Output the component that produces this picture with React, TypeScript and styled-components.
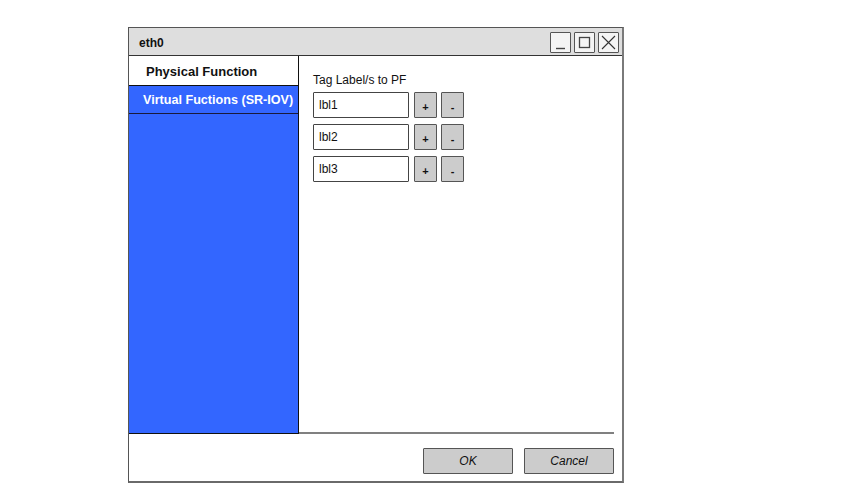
import styled, { createGlobalStyle } from "styled-components";

const Global = createGlobalStyle`
  html, body { margin: 0; padding: 0; background: #ffffff; }
  body {
    font-family: "Liberation Sans", Arial, sans-serif;
    font-size: 12px;
    color: #111;
  }
`;

const labels = ["lbl1", "lbl2", "lbl3"];

export default function App() {
  return (
    <Page>
      <Global />
      <Window>
        <TitleBar>
          <Title>eth0</Title>
          <WinButtons>
            <WinButton aria-label="minimize">
              <svg width="19" height="19" viewBox="0 0 19 19">
                <path d="M5 15.5 H14" stroke="#444" strokeWidth="1.4" fill="none" />
              </svg>
            </WinButton>
            <WinButton aria-label="maximize">
              <svg width="19" height="19" viewBox="0 0 19 19">
                <rect x="4.5" y="4.5" width="10" height="10" stroke="#444" strokeWidth="1.3" fill="none" />
              </svg>
            </WinButton>
            <WinButton aria-label="close">
              <svg width="19" height="19" viewBox="0 0 19 19">
                <path d="M3 3 L16 16 M16 3 L3 16" stroke="#333" strokeWidth="1.1" fill="none" />
              </svg>
            </WinButton>
          </WinButtons>
        </TitleBar>

        <Body>
          <Sidebar>
            <Tab>Physical Function</Tab>
            <Tab $active>Virtual Fuctions (SR-IOV)</Tab>
          </Sidebar>

          <Content>
            <FieldLabel>Tag Label/s to PF</FieldLabel>
            <Rows>
              {labels.map((l) => (
                <Row key={l}>
                  <TextBox>{l}</TextBox>
                  <SmallButton>+</SmallButton>
                  <SmallButton>-</SmallButton>
                </Row>
              ))}
            </Rows>
          </Content>
        </Body>

        <Footer>
          <ActionButton>OK</ActionButton>
          <ActionButton>Cancel</ActionButton>
        </Footer>
      </Window>
    </Page>
  );
}

const Page = styled.div`
  width: 844px;
  height: 490px;
  padding: 27px 0 0 128px;
  box-sizing: border-box;
`;

const Window = styled.div`
  width: 496px;
  height: 456px;
  box-sizing: border-box;
  border: 1px solid #555;
  border-right: 2px solid #7a7a7a;
  border-bottom: 2px solid #6a6a6a;
  display: flex;
  flex-direction: column;
  background: #fff;
`;

const TitleBar = styled.div`
  height: 28px;
  flex: none;
  box-sizing: border-box;
  background: #dedede;
  border-bottom: 1px solid #333;
  display: flex;
  align-items: center;
  justify-content: space-between;
  padding: 0 3px 0 10px;
`;

const Title = styled.span`
  font-weight: bold;
  font-size: 12px;
  margin-top: 2px;
`;

const WinButtons = styled.div`
  display: flex;
  gap: 3px;
  margin-top: 1px;
`;

const WinButton = styled.div`
  width: 21px;
  height: 21px;
  box-sizing: border-box;
  border: 1px solid #555;
  border-radius: 1px;
  background: #f4f4f4;
  display: flex;
  align-items: center;
  justify-content: center;
`;

const Body = styled.div`
  flex: 1;
  display: flex;
  min-height: 0;
`;

const Sidebar = styled.div`
  width: 170px;
  flex: none;
  box-sizing: border-box;
  background: #3366ff;
  border-right: 1px solid #111;
  border-bottom: 1px solid #111;
  display: flex;
  flex-direction: column;
`;

const Tab = styled.div<{ $active?: boolean }>`
  height: ${(p) => (p.$active ? "28px" : "30px")};
  box-sizing: border-box;
  padding-left: ${(p) => (p.$active ? "14px" : "17px")};
  padding-top: 1px;
  display: flex;
  align-items: center;
  font-weight: bold;
  font-size: ${(p) => (p.$active ? "12.6px" : "13px")};
  white-space: nowrap;
  color: ${(p) => (p.$active ? "#ffffff" : "#111")};
  background: ${(p) => (p.$active ? "#3366ff" : "#ffffff")};
  border-bottom: ${(p) => (p.$active ? "1.5px solid #1a1a3a" : "1px solid #111")};
`;

const Content = styled.div`
  flex: 1;
  margin-right: 8px;
  border-bottom: 2px solid #808080;
  padding: 17px 0 0 14px;
  display: flex;
  flex-direction: column;
`;

const FieldLabel = styled.div`
  font-size: 12px;
  height: 14px;
  line-height: 14px;
  margin-bottom: 5px;
`;

const Rows = styled.div`
  display: flex;
  flex-direction: column;
  gap: 6px;
`;

const Row = styled.div`
  display: flex;
  gap: 4px;
  height: 26px;
`;

const TextBox = styled.div`
  width: 96px;
  box-sizing: border-box;
  border: 1.5px solid #444;
  border-radius: 1px;
  background: #fff;
  padding-left: 5px;
  display: flex;
  align-items: center;
  font-size: 12px;
  margin-right: 1px;
`;

const SmallButton = styled.div`
  width: 23px;
  box-sizing: border-box;
  border: 1.5px solid #555;
  border-radius: 1px;
  background: #cccccc;
  display: flex;
  align-items: center;
  justify-content: center;
  font-size: 11px;
  font-weight: bold;
  padding-top: 3px;
`;

const Footer = styled.div`
  height: 47px;
  flex: none;
  box-sizing: border-box;
  display: flex;
  justify-content: flex-end;
  align-items: flex-start;
  gap: 11px;
  padding: 14px 8px 0 0;
`;

const ActionButton = styled.div`
  width: 90px;
  height: 26px;
  box-sizing: border-box;
  border: 1.5px solid #555;
  border-radius: 1px;
  background: #cccccc;
  display: flex;
  align-items: center;
  justify-content: center;
  font-size: 12px;
  font-style: italic;
`;
